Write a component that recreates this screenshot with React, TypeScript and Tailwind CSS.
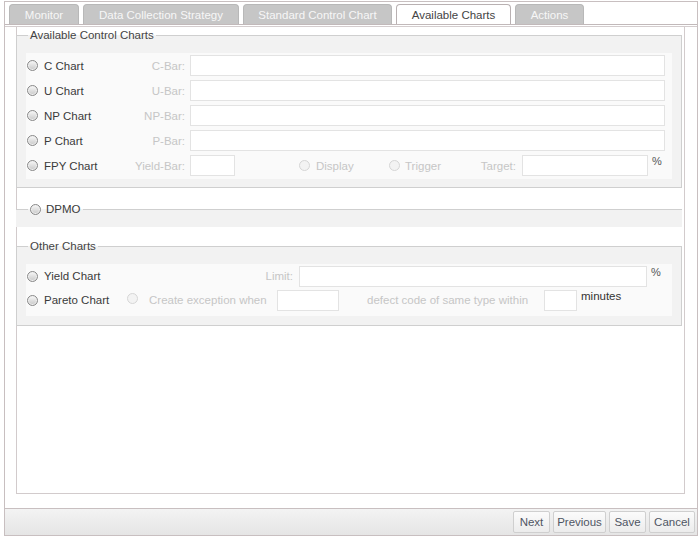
import React from "react";

function Radio({ disabled }: { disabled?: boolean }) {
  return (
    <span
      className={
        "inline-block w-[11px] h-[11px] shrink-0 rounded-full border " +
        (disabled
          ? "border-[#d6d6d6] bg-[#f3f3f3]"
          : "border-[#888] bg-linear-to-b from-[#f8f8f8] to-[#c8c8c8] shadow-[inset_0_0_0_1px_#f0f0f0]")
      }
    />
  );
}

function Box({ w }: { w: string }) {
  return <span className={"block h-[21px] shrink-0 border border-[#e3e3e3] bg-white " + w} />;
}

const tabs = [
  { t: "Monitor", w: "w-[70px]" },
  { t: "Data Collection Strategy", w: "w-[156px]" },
  { t: "Standard Control Chart", w: "w-[149px]" },
  { t: "Available Charts", w: "w-[115px]", active: true },
  { t: "Actions", w: "w-[69px]" },
];

const chartRows = [
  { l: "C Chart", b: "C-Bar:" },
  { l: "U Chart", b: "U-Bar:" },
  { l: "NP Chart", b: "NP-Bar:" },
  { l: "P Chart", b: "P-Bar:" },
];

const buttons = [
  { t: "Next", w: "w-[37px]" },
  { t: "Previous", w: "w-[53px]" },
  { t: "Save", w: "w-[37px]" },
  { t: "Cancel", w: "w-[46px]" },
];

export default function App() {
  return (
    <div className="w-[700px] h-[538px] bg-white font-['Liberation_Sans',Arial,sans-serif] text-[11.5px] leading-[14px] text-[#333]">
      <div className="ml-[4px] mt-[1px] w-[694px] h-[535px] border border-[#c8bfc0] flex flex-col">
        {/* tab bar */}
        <div className="h-[23px] pt-[2px] pl-[4px] flex gap-[4px] border-b border-[#c2b9ba] shrink-0">
          {tabs.map((t) => (
            <div
              key={t.t}
              className={
                "h-[20px] rounded-t-[4px] border border-b-0 flex items-center justify-center " +
                t.w +
                (t.active
                  ? " bg-white border-[#b9b1b2] text-[#444]"
                  : " bg-[#c6c6c6] border-[#b8b8b8] text-[#f7f7f7]")
              }
            >
              {t.t}
            </div>
          ))}
        </div>
        <div className="h-[1px] shrink-0" />
        <div className="h-[1px] bg-[#d4cdce] shrink-0" />
        {/* panel */}
        <div className="ml-[11px] w-[669px] h-[467px] border-x border-b border-[#d2cbcc] shrink-0">
          {/* Available Control Charts */}
          <fieldset className="-ml-[1px] w-[666px] mt-[1px] border border-[#cfcfcf] bg-[#f2f2f2] px-[9px] pb-[8px]">
            <legend className="ml-[2px] px-[2px] text-[#444] leading-[14px]">Available Control Charts</legend>
            <div className="mt-[11px] bg-[#fafafa] pb-[1px]">
              {chartRows.map((r) => (
                <div key={r.l} className="flex h-[25px] items-center">
                  <div className="w-[100px] flex items-center pl-[1px]">
                    <Radio />
                    <span className="ml-[6px] text-[#3a3a3a]">{r.l}</span>
                  </div>
                  <div className="w-[59px] text-right text-[#c6c6c6]">{r.b}</div>
                  <span className="ml-[5px]">
                    <Box w="w-[475px]" />
                  </span>
                </div>
              ))}
              <div className="flex h-[25px] items-center">
                <div className="w-[100px] flex items-center pl-[1px]">
                  <Radio />
                  <span className="ml-[6px] text-[#3a3a3a]">FPY Chart</span>
                </div>
                <div className="w-[59px] text-right text-[#c6c6c6]">Yield-Bar:</div>
                <span className="ml-[5px]">
                  <Box w="w-[45px]" />
                </span>
                <div className="ml-[64px] w-[90px] flex items-center">
                  <Radio disabled />
                  <span className="ml-[6px] text-[#c6c6c6]">Display</span>
                </div>
                <div className="w-[90px] flex items-center">
                  <Radio disabled />
                  <span className="ml-[5px] text-[#c6c6c6]">Trigger</span>
                </div>
                <div className="w-[37px] text-right text-[#c6c6c6] whitespace-nowrap">Target:</div>
                <span className="ml-[6px]">
                  <Box w="w-[126px]" />
                </span>
                <span className="ml-[4px] self-start mt-[1px] text-[#555] text-[11px]">%</span>
              </div>
            </div>
          </fieldset>

          {/* DPMO */}
          <fieldset className="-ml-[1px] w-[666px] mt-[14px] border-t border-[#cfcfcf] bg-[#f2f2f2] px-[9px]">
            <legend className="ml-[3px] px-[2px] leading-[14px] flex items-center">
              <Radio />
              <span className="ml-[5px] text-[#3a3a3a]">DPMO</span>
            </legend>
            <div className="h-[11px]" />
          </fieldset>

          {/* Other Charts */}
          <fieldset className="-ml-[1px] w-[666px] mt-[12px] border border-[#cfcfcf] bg-[#f2f2f2] px-[9px] pb-[9px]">
            <legend className="ml-[2px] px-[2px] text-[#444] leading-[14px]">Other Charts</legend>
            <div className="mt-[11px] bg-[#fafafa] pb-[4px]">
              <div className="flex h-[24px] items-center">
                <div className="w-[100px] flex items-center pl-[1px]">
                  <Radio />
                  <span className="ml-[6px] text-[#3a3a3a]">Yield Chart</span>
                </div>
                <div className="w-[167px] text-right text-[#c6c6c6]">Limit:</div>
                <span className="ml-[6px]">
                  <Box w="w-[348px]" />
                </span>
                <span className="ml-[4px] self-start mt-[1px] text-[#555] text-[11px]">%</span>
              </div>
              <div className="flex h-[24px] items-center">
                <div className="w-[100px] flex items-center pl-[1px]">
                  <Radio />
                  <span className="ml-[6px] text-[#3a3a3a]">Pareto Chart</span>
                </div>
                <span className="ml-[1px]">
                  <Radio disabled />
                </span>
                <span className="ml-[11px] w-[123px] text-[#c6c6c6] whitespace-nowrap">Create exception when</span>
                <span className="ml-[5px]">
                  <Box w="w-[62px]" />
                </span>
                <span className="ml-[28px] w-[173px] text-[#c6c6c6] whitespace-nowrap">defect code of same type within</span>
                <span className="ml-[4px]">
                  <Box w="w-[33px]" />
                </span>
                <span className="ml-[4px] self-start mt-[1px] text-[#333]">minutes</span>
              </div>
            </div>
          </fieldset>
        </div>
        <div className="flex-1" />
        {/* footer */}
        <div className="h-[27px] shrink-0 border-t border-[#c8bfc0] bg-linear-to-b from-[#f3f3f3] to-[#e5e5e5] flex justify-end items-start pt-[2px] pr-[2px] gap-[3px]">
          {buttons.map((b) => (
            <div
              key={b.t}
              className={
                "h-[22px] border border-[#cfcfcf] rounded-[2px] bg-linear-to-b from-[#fbfbfb] to-[#ececec] flex items-center justify-center text-[#4f5563] " +
                b.w
              }
            >
              {b.t}
            </div>
          ))}
        </div>
      </div>
    </div>
  );
}
